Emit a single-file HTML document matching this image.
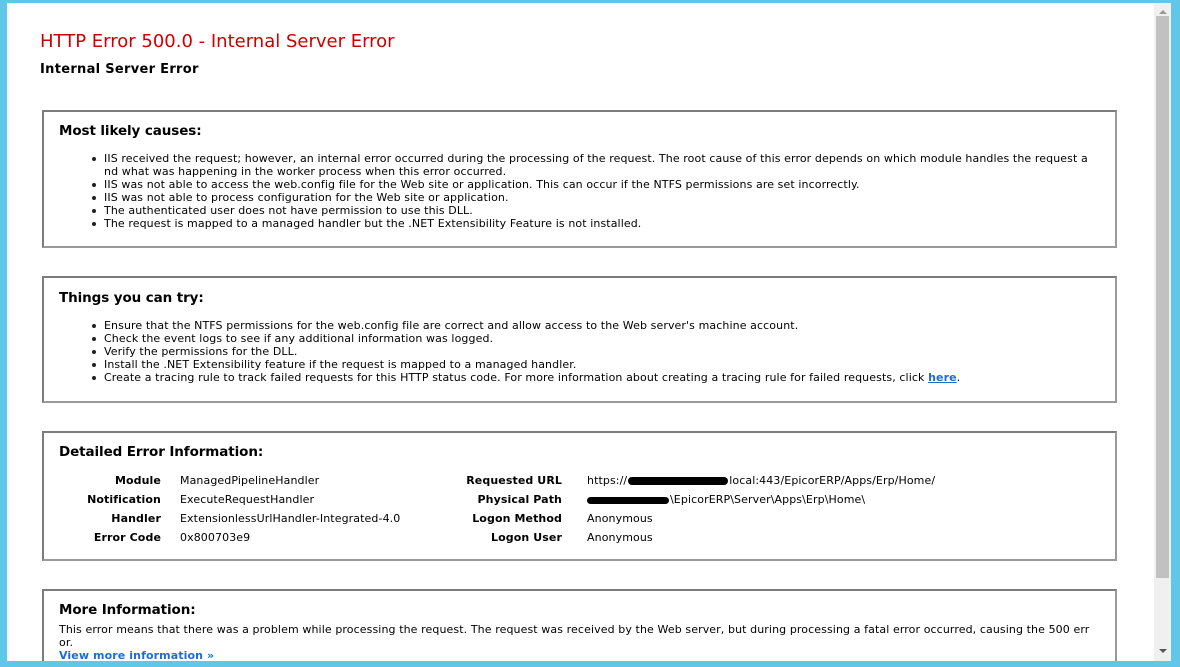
<!DOCTYPE html>
<html><head><meta charset="utf-8"><style>
*{margin:0;padding:0;box-sizing:border-box}
html,body{width:1180px;height:667px;overflow:hidden;background:#5fc7e8}
body{font-family:"DejaVu Sans","Liberation Sans",sans-serif;color:#000}
#win{position:absolute;left:7px;top:3px;width:1164px;height:658px;background:#fff;overflow:hidden}
#sb{position:absolute;left:1154px;top:3px;width:17px;height:658px;background:#f0f0f0}
#thumb{position:absolute;left:2px;top:13px;width:13px;height:562px;background:#c1c1c1}
.t{position:absolute;white-space:nowrap;font-size:11px;line-height:13px;letter-spacing:0.1px;margin-top:-1px}
.box{position:absolute;left:35px;width:1075px;border:2px solid #9a9a9a;border-top-color:#7c7c7c;border-left-color:#7c7c7c}
h3{position:absolute;font-size:13.5px;font-weight:bold;white-space:nowrap;letter-spacing:-0.1px}
.b{position:absolute;width:4px;height:4px;border-radius:2px;background:#222;margin-top:-1px}
.r{text-align:right;font-weight:bold}
a{color:#1a6fd1;font-weight:bold;text-decoration:underline}
</style></head><body>
<div id="win">
<div class="t" style="left:33px;top:30px;font-size:18px;line-height:20px;color:#cc0000;letter-spacing:0px">HTTP Error 500.0 - Internal Server Error</div>
<div class="t" style="left:33px;top:60px;font-size:13px;line-height:16px;font-weight:bold;letter-spacing:0.3px">Internal Server Error</div>

<div class="box" style="top:107px;height:138px"></div>
<h3 style="left:52px;top:120px">Most likely causes:</h3>
<div class="b" style="left:85px;top:155px"></div>
<div class="t" style="left:97px;top:150px">IIS received the request; however, an internal error occurred during the processing of the request. The root cause of this error depends on which module handles the request a</div>
<div class="t" style="left:97px;top:163px">nd what was happening in the worker process when this error occurred.</div>
<div class="b" style="left:85px;top:181px"></div>
<div class="t" style="left:97px;top:176px">IIS was not able to access the web.config file for the Web site or application. This can occur if the NTFS permissions are set incorrectly.</div>
<div class="b" style="left:85px;top:194px"></div>
<div class="t" style="left:97px;top:189px">IIS was not able to process configuration for the Web site or application.</div>
<div class="b" style="left:85px;top:207px"></div>
<div class="t" style="left:97px;top:202px">The authenticated user does not have permission to use this DLL.</div>
<div class="b" style="left:85px;top:220px"></div>
<div class="t" style="left:97px;top:215px">The request is mapped to a managed handler but the .NET Extensibility Feature is not installed.</div>

<div class="box" style="top:273px;height:127px"></div>
<h3 style="left:52px;top:287px">Things you can try:</h3>
<div class="b" style="left:85px;top:322px"></div>
<div class="t" style="left:97px;top:317px">Ensure that the NTFS permissions for the web.config file are correct and allow access to the Web server's machine account.</div>
<div class="b" style="left:85px;top:335px"></div>
<div class="t" style="left:97px;top:330px">Check the event logs to see if any additional information was logged.</div>
<div class="b" style="left:85px;top:348px"></div>
<div class="t" style="left:97px;top:343px">Verify the permissions for the DLL.</div>
<div class="b" style="left:85px;top:361px"></div>
<div class="t" style="left:97px;top:356px">Install the .NET Extensibility feature if the request is mapped to a managed handler.</div>
<div class="b" style="left:85px;top:374px"></div>
<div class="t" style="left:97px;top:369px">Create a tracing rule to track failed requests for this HTTP status code. For more information about creating a tracing rule for failed requests, click <a>here</a>.</div>

<div class="box" style="top:428px;height:130px"></div>
<h3 style="left:52px;top:441px">Detailed Error Information:</h3>
<div class="t r" style="left:60px;width:94px;top:472px">Module</div>
<div class="t r" style="left:60px;width:94px;top:491px">Notification</div>
<div class="t r" style="left:60px;width:94px;top:510px">Handler</div>
<div class="t r" style="left:60px;width:94px;top:529px">Error Code</div>
<div class="t" style="left:173px;top:472px">ManagedPipelineHandler</div>
<div class="t" style="left:173px;top:491px">ExecuteRequestHandler</div>
<div class="t" style="left:173px;top:510px">ExtensionlessUrlHandler-Integrated-4.0</div>
<div class="t" style="left:173px;top:529px">0x800703e9</div>
<div class="t r" style="left:420px;width:135px;top:472px">Requested URL</div>
<div class="t r" style="left:420px;width:135px;top:491px">Physical Path</div>
<div class="t r" style="left:420px;width:135px;top:510px">Logon Method</div>
<div class="t r" style="left:420px;width:135px;top:529px">Logon User</div>
<div class="t" style="left:580px;top:472px">https://<span style="display:inline-block;width:100px;height:8px;background:#000;border-radius:4px;vertical-align:middle;margin:0 1px"></span>local:443/EpicorERP/Apps/Erp/Home/</div>
<div class="t" style="left:580px;top:491px"><span style="display:inline-block;width:82px;height:7px;background:#000;border-radius:4px;vertical-align:middle;margin-right:1px"></span>\EpicorERP\Server\Apps\Erp\Home\</div>
<div class="t" style="left:580px;top:510px">Anonymous</div>
<div class="t" style="left:580px;top:529px">Anonymous</div>

<div class="box" style="top:586px;height:100px"></div>
<h3 style="left:52px;top:599px">More Information:</h3>
<div class="t" style="left:52px;top:621px">This error means that there was a problem while processing the request. The request was received by the Web server, but during processing a fatal error occurred, causing the 500 err</div>
<div class="t" style="left:52px;top:634px">or.</div>
<div class="t" style="left:52px;top:647px"><a style="text-decoration:none">View more information »</a></div>
</div>
<div id="sb"><div id="thumb"></div>
<div style="position:absolute;left:5px;top:7px;border-left:4px solid transparent;border-right:4px solid transparent;border-bottom:4px solid #999"></div>
<div style="position:absolute;left:5px;top:646px;border-left:4px solid transparent;border-right:4px solid transparent;border-top:4px solid #555"></div>
</div>
</body></html>
